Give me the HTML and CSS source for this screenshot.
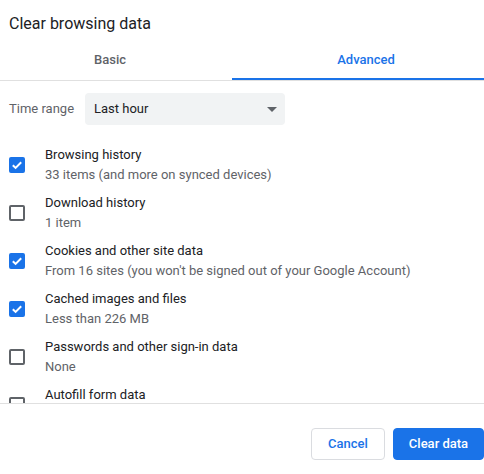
FILE: index.html
```html
<!DOCTYPE html>
<html lang="en">
<head>
<meta charset="utf-8">
<title>Clear browsing data</title>
<link rel="stylesheet" href="styles.css">
</head>
<body>
<div class="dialog">
  <h1 class="title">Clear browsing data</h1>
  <div class="tabs">
    <div class="tab tab-basic">Basic</div>
    <div class="tab tab-advanced active">Advanced</div>
  </div>
  <div class="range">
    <span class="range-label">Time range</span>
    <div class="select">
      <span>Last hour</span>
      <svg class="arrow" width="10" height="5" viewBox="0 0 10 5"><path d="M0 0h10L5 5z" fill="#5f6368"/></svg>
    </div>
  </div>
  <div class="list">
    <div class="row">
      <span class="cb checked"><svg width="16" height="16" viewBox="0 0 16 16"><path d="M3.8 8.2l2.8 2.7 5.6-5.6" fill="none" stroke="#fff" stroke-width="2"/></svg></span>
      <div class="text"><div class="name">Browsing history</div><div class="sub">33 items (and more on synced devices)</div></div>
    </div>
    <div class="row">
      <span class="cb"></span>
      <div class="text"><div class="name">Download history</div><div class="sub">1 item</div></div>
    </div>
    <div class="row">
      <span class="cb checked"><svg width="16" height="16" viewBox="0 0 16 16"><path d="M3.8 8.2l2.8 2.7 5.6-5.6" fill="none" stroke="#fff" stroke-width="2"/></svg></span>
      <div class="text"><div class="name">Cookies and other site data</div><div class="sub">From 16 sites (you won't be signed out of your Google Account)</div></div>
    </div>
    <div class="row">
      <span class="cb checked"><svg width="16" height="16" viewBox="0 0 16 16"><path d="M3.8 8.2l2.8 2.7 5.6-5.6" fill="none" stroke="#fff" stroke-width="2"/></svg></span>
      <div class="text"><div class="name">Cached images and files</div><div class="sub">Less than 226 MB</div></div>
    </div>
    <div class="row">
      <span class="cb"></span>
      <div class="text"><div class="name">Passwords and other sign-in data</div><div class="sub">None</div></div>
    </div>
    <div class="row">
      <span class="cb"></span>
      <div class="text"><div class="name">Autofill form data</div></div>
    </div>
  </div>
  <div class="footer">
    <button class="btn btn-cancel">Cancel</button>
    <button class="btn btn-primary">Clear data</button>
  </div>
</div>
</body>
</html>
```

FILE: styles.css
```css
* { box-sizing: border-box; }
html, body { margin: 0; padding: 0; background: #fff; }
body {
  font-family: Roboto, "Noto Sans", sans-serif;
  font-size: 13px;
  color: #202124;
  width: 484px;
  height: 474px;
  overflow: hidden;
}
.dialog { display: flex; flex-direction: column; height: 474px; }
.title {
  margin: 0;
  padding: 14px 0 6px 9px;
  font-size: 16px;
  font-weight: 400;
  line-height: 20px;
  color: #202124;
}
.tabs {
  display: flex;
  border-bottom: 1px solid #e0e0e0;
}
.tab {
  height: 40px;
  padding-top: 10px;
  line-height: 20px;
  font-weight: 500;
  font-size: 13px;
  color: #5f6368;
  text-align: center;
}
.tab-basic { flex: 0 0 232px; padding-right: 12px; }
.tab-advanced { flex: 1; padding-left: 16px; }
.tab.active { color: #1a73e8; box-shadow: inset 0 -2px 0 #1a73e8; }
.range {
  display: flex;
  align-items: center;
  padding: 12px 0 0 9px;
}
.range-label { flex: 0 0 76px; color: #5f6368; line-height: 20px; }
.select {
  width: 200px;
  height: 32px;
  background: #f1f3f4;
  border-radius: 4px;
  display: flex;
  align-items: center;
  justify-content: space-between;
  padding: 0 8px 0 9px;
  line-height: 20px;
  color: #202124;
}
.arrow { display: block; margin-top: 1px; }
.list {
  height: 278px;
  overflow: hidden;
  padding: 16px 0 0 9px;
}
.row {
  display: flex;
  align-items: center;
  gap: 20px;
  padding: 4px 0;
}
.cb {
  flex: 0 0 16px;
  width: 16px;
  height: 16px;
  border: 2px solid #5f6368;
  border-radius: 2px;
  position: relative;
}
.cb.checked { background: #1a73e8; border-color: #1a73e8; }
.cb svg { position: absolute; left: -2px; top: -2px; }
.text { line-height: 20px; min-height: 40px; }
.name { color: #202124; }
.sub { color: #5f6368; }
.footer {
  border-top: 1px solid #e0e0e0;
  flex: 1;
  display: flex;
  justify-content: flex-end;
  align-items: flex-start;
  gap: 8px;
  padding-top: 24px;
}
.btn {
  font-family: Roboto, "Noto Sans", sans-serif;
  font-size: 13px;
  font-weight: 500;
  height: 32px;
  border-radius: 4px;
  cursor: pointer;
  line-height: 30px;
  padding: 0;
}
.btn-cancel { background: #fff; color: #1a73e8; border: 1px solid #dadce0; width: 74px; }
.btn-primary { background: #1a73e8; color: #fff; border: 1px solid #1a73e8; width: 91px; }
```
